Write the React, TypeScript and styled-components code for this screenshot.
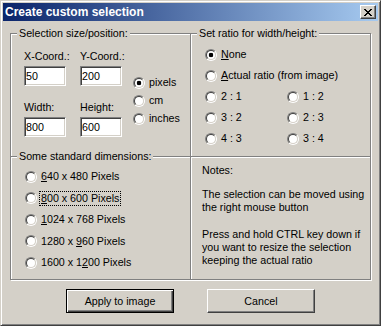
import React, { useState } from "react";
import styled, { createGlobalStyle } from "styled-components";

const GlobalStyle = createGlobalStyle`
  html, body {
    margin: 0;
    padding: 0;
    background: #d4d0c8;
  }
  body {
    font-family: "Liberation Sans", Arial, sans-serif;
    font-size: 10.7px;
    color: #000;
  }
`;

const Window = styled.div`
  box-sizing: border-box;
  width: 381px;
  height: 326px;
  padding: 2px;
  background: #d4d0c8;
  border: 1px solid;
  border-color: #d4d0c8 #404040 #404040 #d4d0c8;
  box-shadow: inset 1px 1px 0 #fff, inset -1px -1px 0 #808080;
  display: flex;
  flex-direction: column;
`;

const TitleBar = styled.div`
  height: 18px;
  display: flex;
  align-items: center;
  justify-content: space-between;
  padding: 0 2px;
  background: linear-gradient(to right, #0a246a, #a6caf0);
  color: #fff;
  font-weight: bold;
  font-size: 12px;
`;

const CloseButton = styled.button`
  box-sizing: border-box;
  width: 16px;
  height: 14px;
  padding: 0;
  background: #d4d0c8;
  border: 1px solid;
  border-color: #fff #404040 #404040 #fff;
  box-shadow: inset -1px -1px 0 #808080;
  display: flex;
  align-items: center;
  justify-content: center;
`;

const Body = styled.div`
  flex: 1;
  padding: 6px 7px 0;
  display: flex;
  flex-direction: column;
`;

const Panels = styled.div`
  display: grid;
  grid-template-columns: 181px 180px;
  grid-template-rows: 129px 124px;
`;

const etched = `
  border: 1px solid #808080;
  box-shadow: inset 1px 1px 0 #fff, 1px 1px 0 #fff;
`;

const Group = styled.fieldset<{ $right?: boolean; $lower?: boolean }>`
  box-sizing: border-box;
  margin: ${(p) => (p.$lower ? "-6px" : "0")} 0 0 ${(p) => (p.$right ? "-1px" : "0")};
  width: 181px;
  height: 130px;
  min-width: 0;
  padding: 0 6px;
  ${etched}
`;

const Legend = styled.legend`
  padding: 0 2px;
  line-height: 13px;
  background: #d4d0c8;
`;

const NotesBox = styled.div`
  box-sizing: border-box;
  margin-left: -1px;
  width: 181px;
  height: 124px;
  padding: 7px 0 0 11px;
  line-height: 13px;
  ${etched}
`;

const NoteText = styled.p<{ $gap: number }>`
  margin: 0 0 ${(p) => p.$gap}px;
  white-space: nowrap;
`;

const CoordArea = styled.div`
  display: flex;
  align-items: flex-start;
  gap: 11px;
  padding: 10px 0 0 7px;
`;

const FieldGrid = styled.div`
  display: grid;
  grid-template-columns: 42px 42px;
  column-gap: 14px;
  row-gap: 15px;
`;

const Field = styled.label`
  display: flex;
  flex-direction: column;
  gap: 3px;
  line-height: 13px;
  white-space: nowrap;
`;

const TextBox = styled.input`
  box-sizing: border-box;
  width: 42px;
  height: 20px;
  margin: 0;
  padding: 0 1px;
  font: inherit;
  background: #fff;
  border: 1px solid;
  border-color: #808080 #fff #fff #808080;
  box-shadow: inset 1px 1px 0 #404040, inset -1px -1px 0 #d4d0c8;
  outline: none;
`;

const UnitList = styled.div`
  display: flex;
  flex-direction: column;
  gap: 5px;
  margin-top: 26px;
`;

const RatioGrid = styled.div`
  display: grid;
  grid-template-columns: 82px auto;
  row-gap: 8px;
  padding: 8px 0 0 8px;
`;

const DimensionList = styled.div`
  display: flex;
  flex-direction: column;
  gap: 8.5px;
  padding: 7px 0 0 8px;
`;

const Option = styled.label<{ $wide?: boolean }>`
  display: flex;
  align-items: center;
  gap: 4px;
  height: 13px;
  line-height: 13px;
  white-space: nowrap;
  grid-column: ${(p) => (p.$wide ? "1 / span 2" : "auto")};
`;

const RadioMark = styled.span<{ $checked?: boolean }>`
  box-sizing: border-box;
  flex: none;
  width: 12px;
  height: 12px;
  border-radius: 50%;
  border: 1px solid;
  border-color: #808080 #fff #fff #808080;
  display: flex;
  align-items: center;
  justify-content: center;
  &::before {
    content: "";
    box-sizing: border-box;
    width: 10px;
    height: 10px;
    border-radius: 50%;
    border: 1px solid;
    border-color: #404040 #d4d0c8 #d4d0c8 #404040;
    background: ${(p) =>
      p.$checked
        ? "radial-gradient(circle, #000 0 2px, #fff 2.6px)"
        : "#fff"};
  }
`;

const Caption = styled.span<{ $focus?: boolean }>`
  padding: 0 1px;
  margin-left: -1px;
  outline: ${(p) => (p.$focus ? "1px dotted #000" : "none")};
`;

const ButtonRow = styled.div`
  display: flex;
  justify-content: center;
  gap: 33px;
  margin-top: 9px;
`;

const PushButton = styled.button<{ $default?: boolean }>`
  box-sizing: border-box;
  width: 108px;
  height: 24px;
  padding: 0;
  font: inherit;
  color: #000;
  background: #d4d0c8;
  border: 1px solid;
  border-color: ${(p) => (p.$default ? "#000" : "#fff #404040 #404040 #fff")};
  box-shadow: ${(p) =>
    p.$default
      ? "inset 1px 1px 0 #fff, inset -1px -1px 0 #404040, inset -2px -2px 0 #808080"
      : "inset -1px -1px 0 #808080"};
`;

const CloseIcon = () => (
  <svg width="8" height="7" viewBox="0 0 8 7" shapeRendering="crispEdges">
    <path
      fill="#000"
      d="M0 0h2v1H0zM6 0h2v1H6zM1 1h2v1H1zM5 1h2v1H5zM2 2h4v1H2zM3 3h2v1H3zM2 4h4v1H2zM1 5h2v1H1zM5 5h2v1H5zM0 6h2v1H0zM6 6h2v1H6z"
    />
  </svg>
);

type RadioProps = {
  checked: boolean;
  onPick: () => void;
  wide?: boolean;
  focus?: boolean;
  children: React.ReactNode;
};

const Radio = ({ checked, onPick, wide, focus, children }: RadioProps) => (
  <Option $wide={wide} onClick={onPick}>
    <RadioMark $checked={checked} />
    <Caption $focus={focus}>{children}</Caption>
  </Option>
);

const units = ["pixels", "cm", "inches"];

const dimensions: [React.ReactNode, string][] = [
  [<><u>6</u>40 x 480 Pixels</>, "640"],
  [<><u>8</u>00 x 600 Pixels</>, "800"],
  [<><u>1</u>024 x 768 Pixels</>, "1024"],
  [<>1280 x <u>9</u>60 Pixels</>, "1280"],
  [<>1600 x 1<u>2</u>00 Pixels</>, "1600"],
];

const ratios = ["2 : 1", "1 : 2", "3 : 2", "2 : 3", "4 : 3", "3 : 4"];

const App = () => {
  const [unit, setUnit] = useState("pixels");
  const [ratio, setRatio] = useState("none");
  const [dim, setDim] = useState("");

  return (
    <>
      <GlobalStyle />
      <Window>
        <TitleBar>
          <span>Create custom selection</span>
          <CloseButton>
            <CloseIcon />
          </CloseButton>
        </TitleBar>
        <Body>
          <Panels>
            <Group>
              <Legend>Selection size/position:</Legend>
              <CoordArea>
                <FieldGrid>
                  <Field>
                    X-Coord.:
                    <TextBox defaultValue="50" />
                  </Field>
                  <Field>
                    Y-Coord.:
                    <TextBox defaultValue="200" />
                  </Field>
                  <Field>
                    Width:
                    <TextBox defaultValue="800" />
                  </Field>
                  <Field>
                    Height:
                    <TextBox defaultValue="600" />
                  </Field>
                </FieldGrid>
                <UnitList>
                  {units.map((u) => (
                    <Radio key={u} checked={unit === u} onPick={() => setUnit(u)}>
                      {u}
                    </Radio>
                  ))}
                </UnitList>
              </CoordArea>
            </Group>
            <Group $right>
              <Legend>Set ratio for width/height:</Legend>
              <RatioGrid>
                <Radio wide checked={ratio === "none"} onPick={() => setRatio("none")}>
                  <u>N</u>one
                </Radio>
                <Radio wide checked={ratio === "actual"} onPick={() => setRatio("actual")}>
                  <u>A</u>ctual ratio (from image)
                </Radio>
                {ratios.map((r) => (
                  <Radio key={r} checked={ratio === r} onPick={() => setRatio(r)}>
                    {r}
                  </Radio>
                ))}
              </RatioGrid>
            </Group>
            <Group $lower>
              <Legend>Some standard dimensions:</Legend>
              <DimensionList>
                {dimensions.map(([label, key]) => (
                  <Radio
                    key={key}
                    checked={dim === key}
                    focus={key === "800"}
                    onPick={() => setDim(key)}
                  >
                    {label}
                  </Radio>
                ))}
              </DimensionList>
            </Group>
            <NotesBox>
              <NoteText $gap={11}>Notes:</NoteText>
              <NoteText $gap={14}>
                The selection can be moved using
                <br />
                the right mouse button
              </NoteText>
              <NoteText $gap={0}>
                Press and hold CTRL key down if
                <br />
                you want to resize the selection
                <br />
                keeping the actual ratio
              </NoteText>
            </NotesBox>
          </Panels>
          <ButtonRow>
            <PushButton $default>Apply to image</PushButton>
            <PushButton>Cancel</PushButton>
          </ButtonRow>
        </Body>
      </Window>
    </>
  );
};

export default App;
